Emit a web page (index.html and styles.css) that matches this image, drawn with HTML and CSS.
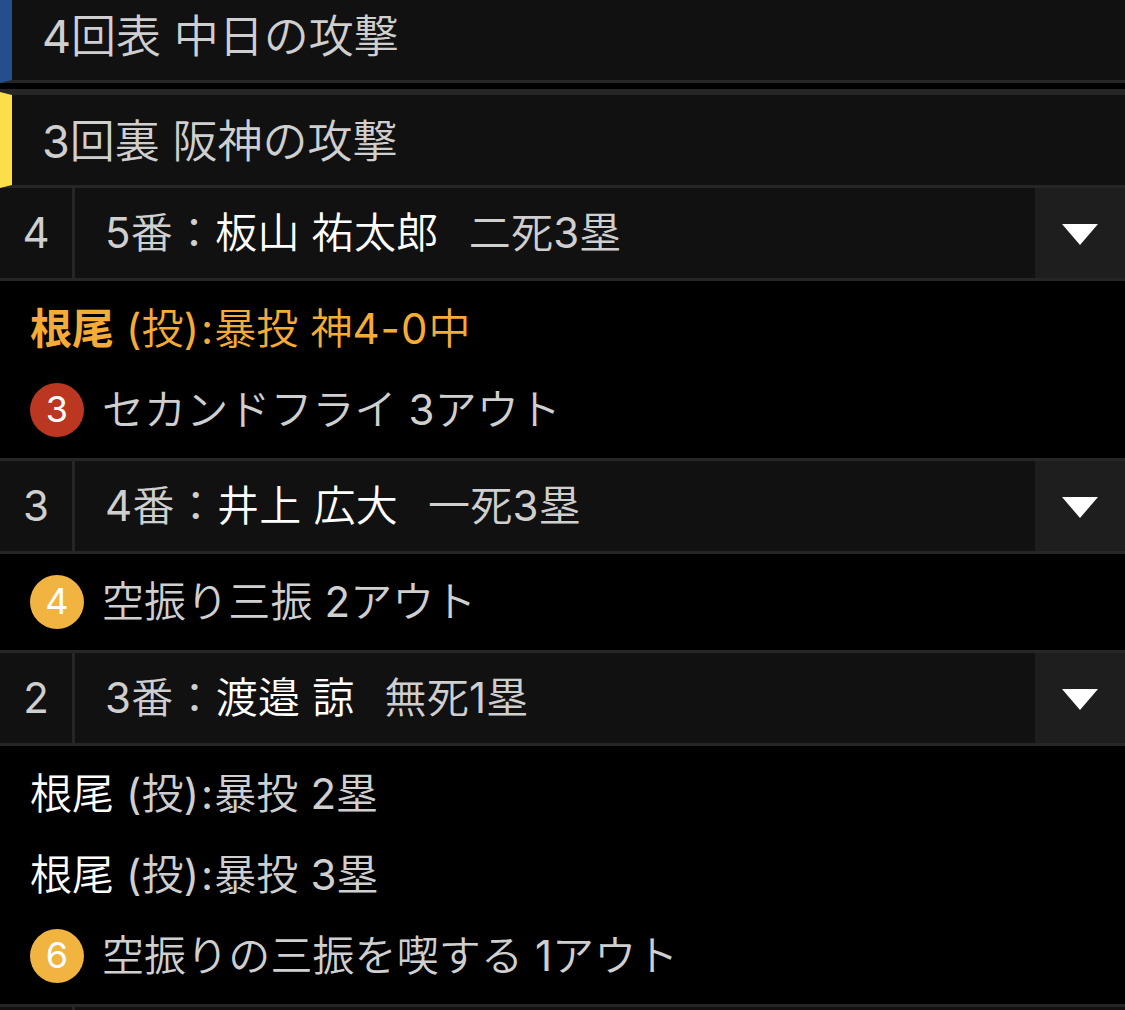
FILE: index.html
```
<!DOCTYPE html>
<html lang="ja">
<head>
    <meta charset="UTF-8">
    <meta name="viewport" content="width=device-width, initial-scale=1.0">
    <title>テキスト速報</title>
    <link rel="stylesheet" href="styles.css">
</head>
<body>
    <div class="live">
        <section class="inning">
            <h2 class="inning-title dragons">4回表 中日の攻撃</h2>
        </section>

        <section class="inning">
            <h2 class="inning-title tigers">3回裏 阪神の攻撃</h2>

            <div class="batter">
                <div class="number">4</div>
                <div class="info">5番：<b>板山 祐太郎</b><span class="runner">二死3塁</span></div>
                <button class="toggle" aria-label="開く"></button>
            </div>
            <div class="plays">
                <p class="play score"><b>根尾</b> (投)<span class="colon">:</span>暴投 神<span class="point">4-0</span>中</p>
                <p class="play"><span class="ball out">3</span>セカンドフライ 3アウト</p>
            </div>

            <div class="batter">
                <div class="number">3</div>
                <div class="info">4番：<b>井上 広大</b><span class="runner">一死3塁</span></div>
                <button class="toggle" aria-label="開く"></button>
            </div>
            <div class="plays">
                <p class="play"><span class="ball">4</span>空振り三振 2アウト</p>
            </div>

            <div class="batter">
                <div class="number">2</div>
                <div class="info">3番：<b>渡邉 諒</b><span class="runner">無死1塁</span></div>
                <button class="toggle" aria-label="開く"></button>
            </div>
            <div class="plays">
                <p class="play"><b>根尾</b> (投)<span class="colon">:</span>暴投 2塁</p>
                <p class="play"><b>根尾</b> (投)<span class="colon">:</span>暴投 3塁</p>
                <p class="play"><span class="ball">6</span>空振りの三振を喫する 1アウト</p>
            </div>

            <div class="batter">
                <div class="number"></div>
                <div class="info"></div>
            </div>
        </section>
    </div>
</body>
</html>
```
FILE: styles.css
```
* {
    box-sizing: border-box;
}
body {
    margin: 0;
    background: #000;
    color: #cfcfcf;
    font-family: Inter, "Noto Sans CJK JP DemiLight", "Noto Sans CJK JP", sans-serif;
    font-size: 42px;
    font-weight: 400;
}
.live {
    height: 1010px;
    overflow: hidden;
}
.inning {
    margin-bottom: 6px;
    border-top: 3px solid #262626;
}
.inning:first-child {
    margin-top: -16px;
}
.inning-title {
    height: 96px;
    margin: 0;
    padding-top: 2px;
    padding-left: 30px;
    background: #111;
    border: 3px solid #262626;
    border-left-width: 12px;
    border-right: 0;
    font-size: 45px;
    font-weight: 400;
    line-height: 90px;
    white-space: nowrap;
}
.inning-title.dragons {
    border-left-color: #254f8c;
}
.inning-title.tigers {
    border-left-color: #fadf4b;
}
.batter {
    display: flex;
    height: 93px;
    background: #111;
    border-bottom: 3px solid #262626;
    line-height: 90px;
    white-space: nowrap;
}
.number {
    width: 75px;
    border-right: 3px solid #262626;
    text-align: center;
}
.info {
    flex: 1;
    padding-left: 30px;
    letter-spacing: 0.25px;
}
.info b,
.play b {
    color: #fff;
    font-weight: 400;
}
.runner {
    margin-left: 30px;
}
.toggle {
    display: flex;
    align-items: center;
    justify-content: center;
    width: 90px;
    padding: 2px 0 0;
    border: 0;
    background: #1e1e1e;
}
.toggle::before {
    content: "";
    border: 18px solid transparent;
    border-top: 21px solid #fff;
    border-bottom: 0;
}
.plays {
    padding: 7.5px 30px;
    border-bottom: 3px solid #262626;
}
.play {
    display: flex;
    align-items: flex-start;
    height: 81px;
    margin: 0;
    letter-spacing: 0.1px;
    line-height: 79px;
    white-space: pre;
}
.play.score {
    color: #f5ab36;
}
.play.score b {
    color: inherit;
    font-family: Inter, "Noto Sans CJK JP", sans-serif;
    font-weight: 700;
}
.colon {
    padding: 0 1px 0 2px;
}
.point {
    letter-spacing: 1px;
}
.ball {
    width: 54px;
    height: 54px;
    margin: 13.5px 18px 0 0;
    border-radius: 50%;
    background: #f1b440;
    color: #fff;
    font-size: 36px;
    line-height: 53px;
    text-align: center;
}
.ball.out {
    background: #bb3722;
}
```
